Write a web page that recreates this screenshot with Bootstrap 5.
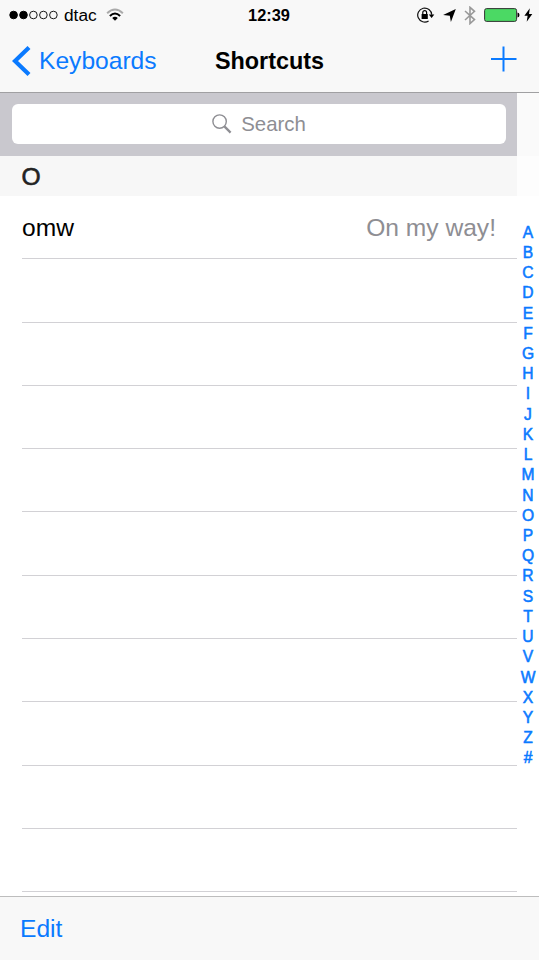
<!DOCTYPE html>
<html lang="en">
<head>
<meta charset="utf-8">
<meta name="viewport" content="width=device-width, initial-scale=1">
<title>Shortcuts</title>
<link href="https://cdn.jsdelivr.net/npm/bootstrap@5.3.0/dist/css/bootstrap.min.css" rel="stylesheet">
<style>
  body { font-family: "Liberation Sans", Arial, sans-serif; font-size: 24.6px; line-height: 1.2; color: #000; background: #fff; }
  .screen { height: 960px; width: 539px; }
  .topbar { height: 93px; background: #f8f8f8; border-bottom: 1px solid #a0a0a2; }
  .status { height: 30px; font-size: 17.3px; padding: 0 6px 0 5px; }
  .status > div, .titlebar > div { flex: 1 1 0; }
  .signal { margin-left: 4px; }
  .carrier { margin-left: 5px; }
  .wifi { margin-left: 9px; }
  .icon-gap { margin-left: 8px; }
  .bolt { margin-left: 4px; }
  .clock { font-size: 16.4px; font-weight: 700; padding-top: 1px; }
  .titlebar { height: 62px; padding: 0 12px; }
  .ios-blue, .ios-blue:hover { color: #0a7aff; text-decoration: none; }
  .plus { margin: -5px 10px 0 0; }
  .heading { font-size: 23.4px; font-weight: 700; margin: 0; line-height: 1.2; }
  .content { height: 803px; }
  .listing { width: 517px; }
  .searchbar { height: 63px; background: #c9c8ce; padding: 11px 11px 12px 12px; }
  .searchfield { height: 40px; border-radius: 6px; color: #8e8e93; font-size: 20.4px; }
  .search-label { margin-left: 9px; }
  .section { height: 40px; background: #f7f7f7; padding: 2px 0 0 21.5px; color: #222; -webkit-text-stroke: .6px #222; }
  .entry { height: 63.3px; margin-left: 22px; padding: 2px 21px 0 0; border-bottom: 1px solid #d2d1d5; flex: none; }
  .answer { color: #8e8e93; }
  .side { width: 22px; }
  .side-top { height: 63px; background: #fafafa; }
  .side-mid { height: 40px; background: #fdfdfd; }
  .letters { padding-top: 26.7px; font-size: 15.6px; -webkit-text-stroke: .55px #0a7aff; }
  .letters a { height: 20.23px; line-height: 20.23px; }
  .toolbar { height: 64px; background: #f8f8f8; border-top: 1px solid #bdbdbd; padding: 0 20px; }
  svg { display: block; flex: none; }
</style>
</head>
<body>
<div class="screen d-flex flex-column overflow-hidden">
  <header class="topbar flex-shrink-0">
    <div class="status d-flex align-items-center">
      <div class="d-flex align-items-center">
        <svg class="signal" width="50" height="10" viewBox="0 0 50 10"><g stroke="#000"><circle cx="4.6" cy="5" r="3.8"/><circle cx="14.5" cy="5" r="3.8"/><g fill="none" stroke-width=".9"><circle cx="24.4" cy="5" r="3.8"/><circle cx="34.4" cy="5" r="3.8"/><circle cx="44.4" cy="5" r="3.8"/></g></g></svg>
        <span class="carrier">dtac</span>
        <svg class="wifi" width="18" height="14" viewBox="0 0 19 14" fill="none" stroke-width="2.1"><path d="M1.2 5.2Q9.5-2.8 17.8 5.2" stroke="#aaa"/><path d="M4.1 8.1Q9.5 2.8 14.9 8.1" stroke="#000"/><path d="M6.5 10.2Q9.5 7.6 12.5 10.2L9.5 13.2Z" fill="#000"/></svg>
      </div>
      <span class="clock">12:39</span>
      <div class="d-flex align-items-center justify-content-end">
        <svg width="18" height="16" viewBox="0 0 18 16"><path d="M11.6 13.9A7 7 0 1 1 14.7 7.8" fill="none" stroke="#111" stroke-width="1.2"/><path d="M11.8 7.5h5.5L14.6 11Z"/><path d="M4.6 7h6.2v5H4.6Z"/><path d="M5.8 7V5.5a1.9 1.9 0 0 1 3.8 0V7" fill="none" stroke="#000" stroke-width="1.2"/></svg>
        <svg class="icon-gap" width="13" height="13" viewBox="0 0 13 13"><path d="M12.8.1 7.9 12.9 6.8 6.7.1 5.9Z"/></svg>
        <svg class="icon-gap" width="12" height="19" viewBox="0 0 12 19"><path d="M1 5l9.5 8.6L6 17.6V1.3l4.5 4L1 14" fill="none" stroke="#999" stroke-width="1.6"/></svg>
        <svg class="icon-gap" width="36" height="14" viewBox="0 0 36 14"><rect x=".6" y=".6" width="32" height="12.8" rx="2" fill="#4bd964" stroke="#333" stroke-width="1"/><path d="M33.5 4.5q2 .3 2 2.5t-2 2.5Z"/></svg>
        <svg class="bolt" width="9" height="14" viewBox="0 0 9 14"><path d="M5.8.3.4 7.8h3.2L2.7 13.7 8.3 5.9H5Z"/></svg>
      </div>
    </div>
    <nav class="titlebar d-flex align-items-center">
      <div class="d-flex"><a href="#" class="ios-blue d-flex align-items-center">
        <svg width="19" height="30" viewBox="0 0 19 30"><path d="M17 1.5 3 15 17 28.5" fill="none" stroke="#0a7aff" stroke-width="4.2"/></svg>
        <span class="ps-2">Keyboards</span></a></div>
      <h1 class="heading">Shortcuts</h1>
      <div class="d-flex justify-content-end">
        <a class="plus" href="#" aria-label="Add"><svg width="26" height="26" viewBox="0 0 26 26"><path d="M12.5 .5v25M0 13h25.5" stroke="#0a7aff" stroke-width="2"/></svg></a>
      </div>
    </nav>
  </header>

  <main class="content d-flex overflow-hidden">
    <div class="listing d-flex flex-column">
      <div class="searchbar flex-shrink-0">
        <div class="searchfield bg-white d-flex align-items-center justify-content-center">
          <svg width="20" height="20" viewBox="0 0 20 20" fill="none" stroke="#8e8e93"><circle cx="7.6" cy="7.6" r="6.7" stroke-width="1.4"/><path d="m12.4 12.4 6.2 6.2" stroke-width="2.3"/></svg>
          <span class="search-label">Search</span>
        </div>
      </div>
      <div class="section flex-shrink-0 d-flex align-items-center">O</div>
      <div class="entry d-flex align-items-center justify-content-between"><span>omw</span><span class="answer">On my way!</span></div>
      <div class="entry"></div><div class="entry"></div><div class="entry"></div><div class="entry"></div><div class="entry"></div>
      <div class="entry"></div><div class="entry"></div><div class="entry"></div><div class="entry"></div><div class="entry"></div>
    </div>
    <div class="side">
      <div class="side-top"></div><div class="side-mid"></div>
      <div class="letters d-flex flex-column text-center">
        <a class="ios-blue" href="#">A</a><a class="ios-blue" href="#">B</a><a class="ios-blue" href="#">C</a><a class="ios-blue" href="#">D</a><a class="ios-blue" href="#">E</a><a class="ios-blue" href="#">F</a><a class="ios-blue" href="#">G</a><a class="ios-blue" href="#">H</a><a class="ios-blue" href="#">I</a><a class="ios-blue" href="#">J</a><a class="ios-blue" href="#">K</a><a class="ios-blue" href="#">L</a><a class="ios-blue" href="#">M</a><a class="ios-blue" href="#">N</a><a class="ios-blue" href="#">O</a><a class="ios-blue" href="#">P</a><a class="ios-blue" href="#">Q</a><a class="ios-blue" href="#">R</a><a class="ios-blue" href="#">S</a><a class="ios-blue" href="#">T</a><a class="ios-blue" href="#">U</a><a class="ios-blue" href="#">V</a><a class="ios-blue" href="#">W</a><a class="ios-blue" href="#">X</a><a class="ios-blue" href="#">Y</a><a class="ios-blue" href="#">Z</a><a class="ios-blue" href="#">#</a>
      </div>
    </div>
  </main>

  <footer class="toolbar flex-shrink-0 d-flex align-items-center"><a href="#" class="ios-blue">Edit</a></footer>
</div>
<script src="https://cdn.jsdelivr.net/npm/bootstrap@5.3.0/dist/js/bootstrap.bundle.min.js"></script>
</body>
</html>
